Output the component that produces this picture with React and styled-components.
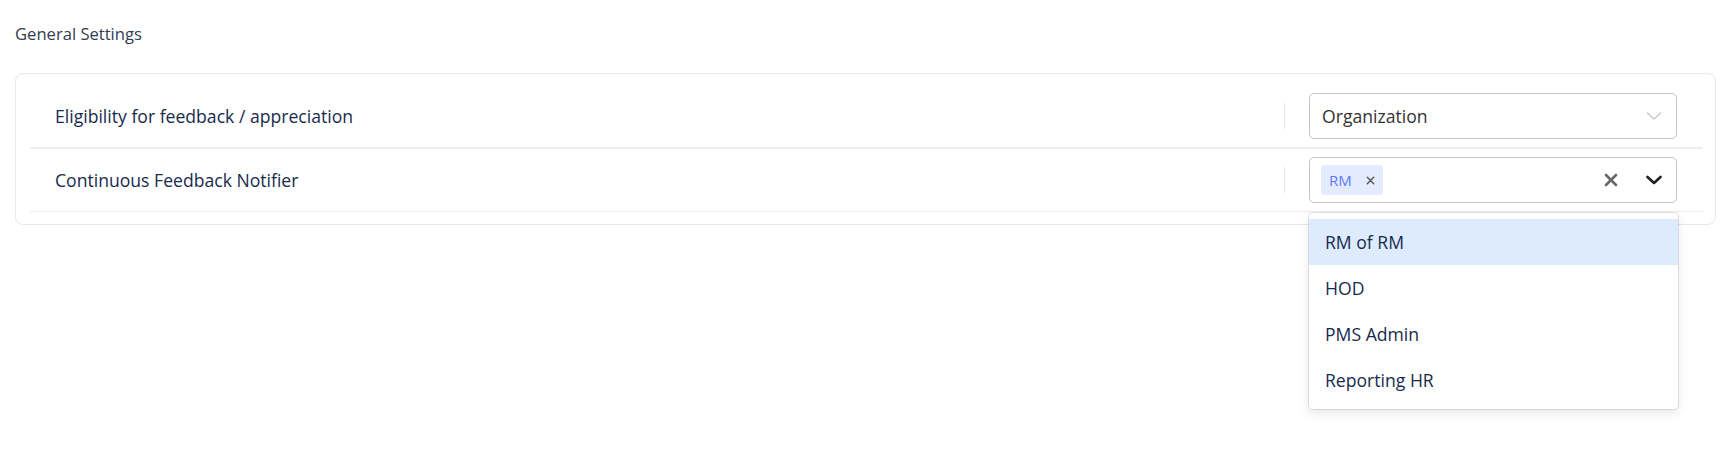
import React from "react";
import styled, { createGlobalStyle } from "styled-components";

const GlobalStyle = createGlobalStyle`
  body {
    margin: 0;
    background: #ffffff;
    font-family: "Open Sans", "Noto Sans", sans-serif;
  }
`;

const Page = styled.div`
  box-sizing: border-box;
  min-height: 100vh;
  padding: 23px 8px 40px 15px;
`;

const Title = styled.div`
  font-size: 16.6px;
  line-height: 22px;
  color: #323c50;
  margin-bottom: 28px;
`;

const Card = styled.div`
  border: 1px solid #e8e8e8;
  border-radius: 8px;
  padding: 11px 12px 12px 14px;
`;

const Row = styled.div`
  display: flex;
  align-items: center;
  padding: 8px 26px 8px 25px;
  border-bottom: ${(p) => (p.$thick ? 2 : 1)}px solid #eeeeee;
`;

const Label = styled.div`
  flex: 1;
  font-size: 17.6px;
  color: #172b4d;
`;

const Separator = styled.div`
  width: 1px;
  height: 26px;
  background: #e6e6e6;
  margin-right: 24px;
`;

const SelectBox = styled.div`
  position: relative;
  box-sizing: border-box;
  width: 368px;
  height: 46px;
  border: 1px solid #c4c4c4;
  border-radius: 5px;
  display: flex;
  align-items: center;
  padding: 0 14px 0 12px;
  background: #fff;
`;

const Value = styled.div`
  flex: 1;
  font-size: 17.6px;
  color: #333333;
`;

const Values = styled.div`
  flex: 1;
  display: flex;
  align-items: center;
`;

const Chip = styled.div`
  display: flex;
  align-items: center;
  height: 30px;
  border-radius: 3px;
  background: #e5ebff;
  margin-left: -1px;
`;

const ChipLabel = styled.span`
  font-size: 15px;
  color: #5b7bf9;
  padding: 0 7px 0 8px;
`;

const ChipRemove = styled.span`
  display: flex;
  align-items: center;
  justify-content: center;
  width: 24px;
  height: 30px;
  color: #555;
`;

const Indicators = styled.div`
  display: flex;
  align-items: center;
  gap: ${(p) => p.$gap || 0}px;
`;

const Menu = styled.div`
  position: absolute;
  top: calc(100% + 11px);
  left: -1px;
  width: 369px;
  background: #fff;
  border-radius: 4px;
  padding: 6px 0;
  box-shadow: 0 0 0 1px rgba(0, 0, 0, 0.1), 0 4px 11px rgba(0, 0, 0, 0.1);
  z-index: 2;
`;

const Option = styled.div`
  height: 46px;
  display: flex;
  align-items: center;
  padding: 0 16px;
  font-size: 17.6px;
  color: #172b4d;
  background: ${(p) => (p.$active ? "#deebff" : "transparent")};
`;

const Chevron = ({ color, width }) => (
  <svg width="16" height="16" viewBox="0 0 16 16" fill="none">
    <path d="M1.5 5 L8 11 L14.5 5" stroke={color} strokeWidth={width} strokeLinecap="round" strokeLinejoin="round" />
  </svg>
);

const Cross = ({ size, color, width }) => (
  <svg width={size} height={size} viewBox="0 0 14 14" fill="none">
    <path d="M2 2 L12 12 M12 2 L2 12" stroke={color} strokeWidth={width} strokeLinecap="round" />
  </svg>
);

const options = ["RM of RM", "HOD", "PMS Admin", "Reporting HR"];

export default function App() {
  return (
    <>
      <GlobalStyle />
      <Page>
        <Title>General Settings</Title>
        <Card>
          <Row $thick>
            <Label>Eligibility for feedback / appreciation</Label>
            <Separator />
            <SelectBox>
              <Value>Organization</Value>
              <Indicators>
                <Chevron color="#cccccc" width={1.6} />
              </Indicators>
            </SelectBox>
          </Row>
          <Row>
            <Label>Continuous Feedback Notifier</Label>
            <Separator />
            <SelectBox>
              <Values>
                <Chip>
                  <ChipLabel>RM</ChipLabel>
                  <ChipRemove>
                    <Cross size={9} color="#555" width={2.2} />
                  </ChipRemove>
                </Chip>
              </Values>
              <Indicators $gap={28}>
                <Cross size={14} color="#666" width={2.6} />
                <Chevron color="#222" width={2.6} />
              </Indicators>
              <Menu>
                {options.map((o, i) => (
                  <Option key={o} $active={i === 0}>
                    {o}
                  </Option>
                ))}
              </Menu>
            </SelectBox>
          </Row>
        </Card>
      </Page>
    </>
  );
}
